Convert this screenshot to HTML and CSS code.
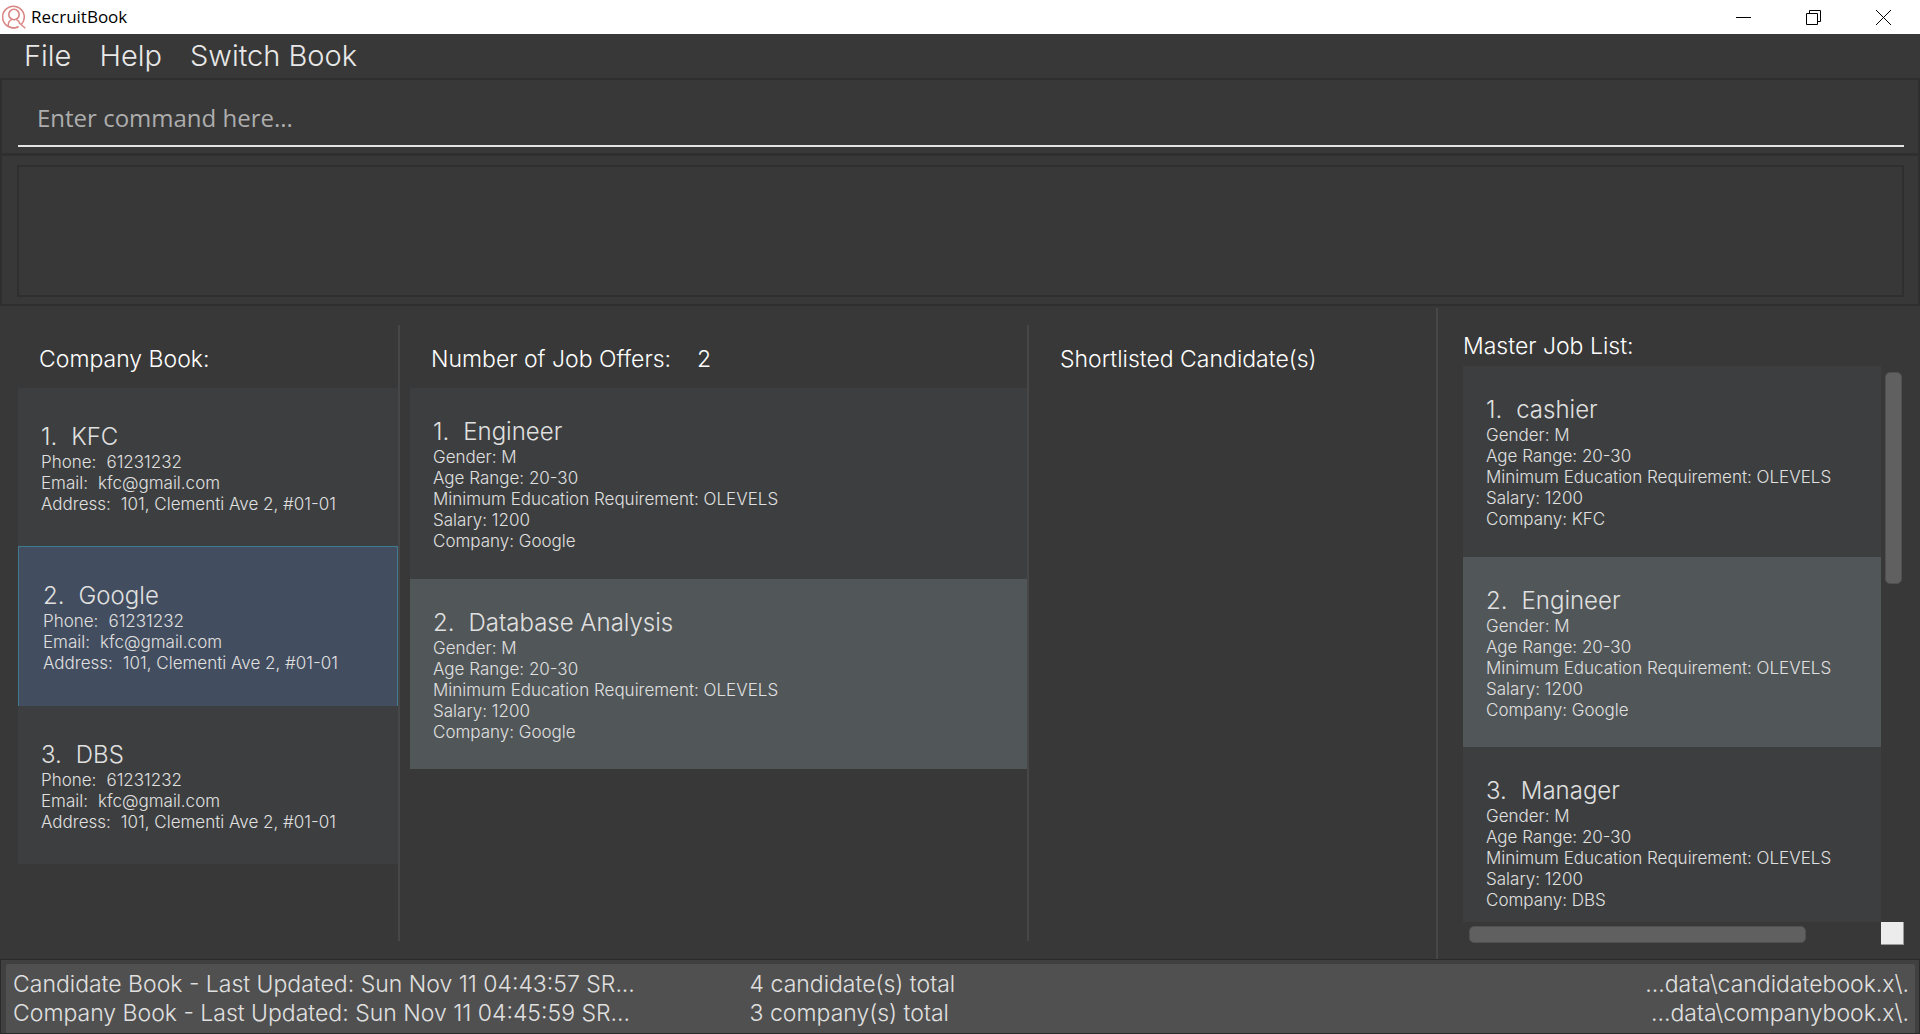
FILE: index.html
```html
<!DOCTYPE html>
<html lang="en">
<head>
<meta charset="utf-8">
<title>RecruitBook</title>
<link rel="stylesheet" href="styles.css">
</head>
<body>
<div class="window">
  <header class="titlebar">
    <svg class="logo" width="24" height="24" viewBox="0 0 24 24" fill="none" stroke="#d98583" aria-hidden="true">
      <path d="M19.5 19.3A10.8 10.8 0 1 0 16 21.9" stroke-width="1.5"/>
      <circle cx="12" cy="9.5" r="5.2" stroke-width="1.6"/>
      <path d="M6.3 21.5v-1.8c0-2.800 1.500-4.200 3.400-5M14.300 14.700c2 .8 3.400 2.200 3.400 4.500M17 17.700l6.300 5.600M7 21.700c3.200 1.500 6.800 1.500 9.800 0" stroke-width="1.4"/>
    </svg>
    <h1 class="app-name">RecruitBook</h1>
    <button class="win-btn" type="button" aria-label="Minimize">
      <svg width="15" height="15" viewBox="0 0 15 15" stroke="#000" fill="none"><path d="M0 7.500h15"/></svg>
    </button>
    <button class="win-btn" type="button" aria-label="Restore">
      <svg width="15" height="15" viewBox="0 0 15 15" stroke="#000" fill="none"><path d="M.5 3.500h11v11H.5zM3.500 3.500v-3h11v11h-3"/></svg>
    </button>
    <button class="win-btn" type="button" aria-label="Close">
      <svg width="15" height="15" viewBox="0 0 15 15" stroke="#000" fill="none"><path d="M0 0l15 15M15 0L0 15"/></svg>
    </button>
  </header>

  <nav class="menubar" aria-label="Main menu">
    <button class="menu" type="button">File</button>
    <button class="menu" type="button">Help</button>
    <button class="menu" type="button">Switch Book</button>
  </nav>

  <div class="command-pane">
    <input class="command" type="text" placeholder="Enter command here..." aria-label="Command">
  </div>

  <div class="result-pane">
    <output class="result" aria-label="Result"></output>
  </div>

  <main class="panels">
    <section class="panel">
      <h2 class="panel-title">Company Book:</h2>
      <ol class="cards">
        <li class="card company">
          <h3 class="card-title"><span>1.</span><span>KFC</span></h3>
          <p><span class="key">Phone:</span>61231232</p>
          <p><span class="key">Email:</span>kfc@gmail.com</p>
          <p><span class="key">Address:</span>101, Clementi Ave 2, #01-01</p>
        </li>
        <li class="card company selected">
          <h3 class="card-title"><span>2.</span><span>Google</span></h3>
          <p><span class="key">Phone:</span>61231232</p>
          <p><span class="key">Email:</span>kfc@gmail.com</p>
          <p><span class="key">Address:</span>101, Clementi Ave 2, #01-01</p>
        </li>
        <li class="card company">
          <h3 class="card-title"><span>3.</span><span>DBS</span></h3>
          <p><span class="key">Phone:</span>61231232</p>
          <p><span class="key">Email:</span>kfc@gmail.com</p>
          <p><span class="key">Address:</span>101, Clementi Ave 2, #01-01</p>
        </li>
      </ol>
    </section>

    <section class="panel offers">
      <h2 class="panel-title">Number of Job Offers:<span class="count">2</span></h2>
      <ol class="cards">
        <li class="card job">
          <h3 class="card-title"><span>1.</span><span>Engineer</span></h3>
          <p>Gender: M</p>
          <p>Age Range: 20-30</p>
          <p>Minimum Education Requirement: OLEVELS</p>
          <p>Salary: 1200</p>
          <p>Company: Google</p>
        </li>
        <li class="card job even">
          <h3 class="card-title"><span>2.</span><span>Database Analysis</span></h3>
          <p>Gender: M</p>
          <p>Age Range: 20-30</p>
          <p>Minimum Education Requirement: OLEVELS</p>
          <p>Salary: 1200</p>
          <p>Company: Google</p>
        </li>
      </ol>
    </section>

    <section class="panel shortlist">
      <h2 class="panel-title">Shortlisted Candidate(s)</h2>
    </section>

    <section class="master">
      <h2 class="master-title">Master Job List:</h2>
      <div class="scroll-area">
        <ol class="cards">
          <li class="card job">
            <h3 class="card-title"><span>1.</span><span>cashier</span></h3>
            <p>Gender: M</p>
            <p>Age Range: 20-30</p>
            <p>Minimum Education Requirement: OLEVELS</p>
            <p>Salary: 1200</p>
            <p>Company: KFC</p>
          </li>
          <li class="card job even">
            <h3 class="card-title"><span>2.</span><span>Engineer</span></h3>
            <p>Gender: M</p>
            <p>Age Range: 20-30</p>
            <p>Minimum Education Requirement: OLEVELS</p>
            <p>Salary: 1200</p>
            <p>Company: Google</p>
          </li>
          <li class="card job">
            <h3 class="card-title"><span>3.</span><span>Manager</span></h3>
            <p>Gender: M</p>
            <p>Age Range: 20-30</p>
            <p>Minimum Education Requirement: OLEVELS</p>
            <p>Salary: 1200</p>
            <p>Company: DBS</p>
          </li>
        </ol>
        <div class="bar-v" aria-hidden="true"><div class="thumb-v"></div></div>
        <div class="bar-h" aria-hidden="true"><div class="thumb-h"></div></div>
        <div class="corner" aria-hidden="true"></div>
      </div>
    </section>
  </main>

  <footer class="statusbar">
    <div class="status">
      <span>Candidate Book - Last Updated: Sun Nov 11 04:43:57 SR...</span>
      <span>4 candidate(s) total</span>
      <span class="path">...data\candidatebook.x\.</span>
      <span>Company Book - Last Updated: Sun Nov 11 04:45:59 SR...</span>
      <span>3 company(s) total</span>
      <span class="path">...data\companybook.x\.</span>
    </div>
  </footer>
</div>
</body>
</html>
```
FILE: styles.css
```css
* {
  box-sizing: border-box;
  margin: 0;
  padding: 0;
}

body {
  background: #383838;
  color: #e0e0e0;
  font-family: Inter, "Noto Sans", sans-serif;
  font-weight: 300;
  font-size: 17px;
  line-height: 21px;
}

.window {
  display: flex;
  flex-direction: column;
  height: 100vh;
}

/* Title bar */
.titlebar {
  display: flex;
  align-items: center;
  flex: none;
  height: 34px;
  padding: 0 2px;
  background: #fff;
}

.app-name {
  flex: 1;
  margin-left: 5px;
  color: #000;
  font: 400 17px/24px "Open Sans", "Noto Sans", sans-serif;
}

.win-btn {
  display: grid;
  place-items: center;
  width: 70px;
  height: 34px;
  border: 0;
  background: none;
}

/* Menu */
.menubar {
  display: flex;
  flex: none;
  gap: 28px;
  height: 44px;
  padding-left: 24px;
}

.menu {
  border: 0;
  background: none;
  color: #e8e8e8;
  font: 300 29px/44px Inter, "Noto Sans", sans-serif;
}

/* Command box */
.command-pane {
  flex: none;
  padding: 14px 14px 6px 16px;
  border: 2px solid #2f2f2f;
}

.command {
  display: block;
  width: 100%;
  height: 53px;
  padding: 0 19px 4px;
  border: 0;
  border-bottom: 2px solid #e4e4e4;
  outline: 0;
  background: none;
  color: #fff;
  font: 400 24px/36px "Open Sans", "Noto Sans", sans-serif;
}

.command::placeholder {
  color: #adadad;
  opacity: 1;
}

/* Result box */
.result-pane {
  flex: none;
  padding: 9px 14px 7px 15px;
  border: 2px solid #2f2f2f;
  border-top-width: 1px;
}

.result {
  display: block;
  height: 132px;
  border: 2px solid #2f2f2f;
}

/* Panels */
.panels {
  display: grid;
  flex: 1;
  grid-template-columns: 382fr 629fr 409fr 482fr;
  grid-template-rows: minmax(0, 1fr);
  min-height: 0;
  padding-left: 18px;
}

.panel {
  margin: 19px 0 18px;
  border-right: 2px solid #474747;
}

.offers {
  padding-left: 10px;
}

.shortlist {
  margin: 2px 0 0;
  padding: 17px 0 0 10px;
}

.panel-title,
.master-title {
  color: #fff;
  font-size: 23px;
  font-weight: 300;
  line-height: 28px;
}

.panel-title {
  padding: 20px 0 15px 21px;
}

.count {
  margin-left: 26px;
}

.cards {
  list-style: none;
}

.card {
  background: #3c3e3f;
}

.company {
  padding: 33px 23px 31px;
}

.job {
  padding: 28px 23px 27px;
}

.even {
  padding-bottom: 26px;
  background: #515658;
}

.selected {
  padding: 33px 24px 32px;
  border: solid #3e7b91;
  border-width: 1px 1px 0;
  background: #424d5f;
}

.card-title {
  display: flex;
  gap: 14px;
  font-size: 24px;
  font-weight: 300;
  line-height: 31px;
}

.key {
  margin-right: 10px;
}

/* Master job list */
.master {
  display: flex;
  flex-direction: column;
  min-height: 0;
  padding: 26px 16px 14px 25px;
}

.master-title {
  padding-bottom: 6px;
}

.scroll-area {
  display: grid;
  flex: 1;
  grid-template-columns: 1fr 23px;
  grid-template-rows: minmax(0, 1fr) 23px;
  min-height: 0;
}

.scroll-area .cards {
  overflow: hidden;
}

.bar-v {
  padding: 6px 2px 6px 4px;
}

.thumb-v {
  height: 39%;
  border: 1px solid #505050;
  border-radius: 5px;
  background: #606060;
}

.bar-h {
  padding: 4px 6px 2px;
}

.thumb-h {
  width: 83%;
  height: 17px;
  border: 1px solid #505050;
  border-radius: 5px;
  background: #606060;
}

.corner {
  border: solid #9a9a9a;
  border-width: 0 1px 1px 0;
  background: #ececec;
}

/* Status bar */
.statusbar {
  flex: none;
  padding: 4px 4px 0 5px;
  border: 1px solid #2a2a2a;
  background: #404040;
}

.status {
  display: grid;
  grid-template-columns: 737fr 500fr 660fr;
  padding: 6px 6px 5px 7px;
  border-radius: 2px 2px 0 0;
  background: #505050;
  font-size: 23px;
  line-height: 29px;
}

.path {
  text-align: right;
}
```
